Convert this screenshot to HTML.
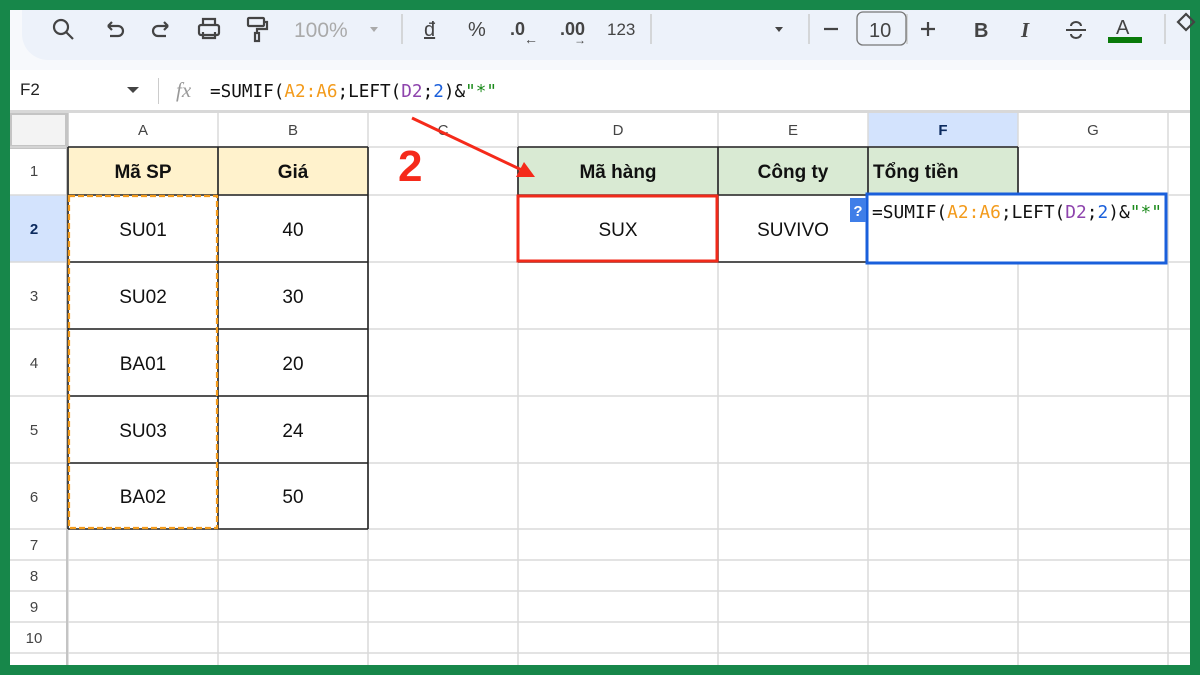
<!DOCTYPE html>
<html><head><meta charset="utf-8"><style>
*{margin:0;padding:0;box-sizing:border-box}
body{width:1200px;height:675px;background:#17874a;position:relative;overflow:hidden;font-family:"Liberation Sans",Arial,sans-serif}
.abs{position:absolute}
#main{left:10px;top:10px;width:1180px;height:655px;background:#fff;overflow:hidden}
</style></head><body>
<div id="main" class="abs">
 <div class="abs" style="left:0;top:0;width:1180px;height:60px;background:#f7f9fc"></div>
 <div class="abs" style="left:12px;top:0;width:1180px;height:50px;background:#edf2fa;border-radius:0 0 0 26px"></div>
 <div class="abs" style="left:0;top:70px;font-size:17px;color:#222;left:10px">F2</div>
 <svg class="abs" style="left:117px;top:76px" width="12" height="8"><path d="M0 1h12L6 7z" fill="#444"/></svg>
 <div class="abs" style="left:148px;top:68px;width:1px;height:26px;background:#ccc"></div>
 <div class="abs" style="left:166px;top:68px;font-family:'Liberation Serif',serif;font-style:italic;font-size:21px;color:#999">fx</div>
 <div class="abs" style="left:0;top:100px;width:1180px;height:3px;background:#d8d8d8"></div>
</div>
<!-- toolbar (body coords) -->
<svg class="abs" style="left:0;top:0" width="1200" height="110" fill="none" stroke="#444" stroke-width="2.2">
 <circle cx="61" cy="27" r="7"/><path d="M66 32l7 7"/>
 <path d="M108 26h10a5 5 0 010 10h-8M108 26l4-4M108 26l4 4"/>
 <path d="M168 26h-10a5 5 0 000 10h8M168 26l-4-4M168 26l-4 4"/>
 <rect x="199" y="25" width="20" height="10" rx="2"/><path d="M203 25v-6h12v6M203 32v6h12v-6"/>
 <rect x="248" y="18" width="16" height="8" rx="1"/><path d="M264 22h3v7h-10v4"/><rect x="255" y="33" width="4" height="8"/>
 <path d="M370 27l4 5 4-5z" fill="#aaa" stroke="none"/>
 <path d="M402 14v30M651 14v30M809 14v30M907 14v30M1165 14v30" stroke="#ccc" stroke-width="1.5"/>
 <path d="M775 27l4 5 4-5z" fill="#444" stroke="none"/>
 <path d="M824 29h14M921 29h14M928 22v14"/>
 <rect x="857" y="12" width="49" height="33" rx="6" stroke="#777" stroke-width="1.3"/>
 <path d="M1066 30h20" stroke-width="2"/>
 <path d="M1071 26a5 4 0 0110 0M1071 34a5 4 0 0010 0" stroke-width="2"/>
 <rect x="1108" y="37" width="34" height="6" fill="#0a7a0a" stroke="none"/>
 <path d="M1178 22l8-8 8 8-8 8z"/>
 <g stroke="none" font-family="Liberation Sans" fill="#444">
  <text x="294" y="37" font-size="21" fill="#aaa">100%</text>
  <text x="424" y="36" font-size="20" text-decoration="underline">đ</text>
  <text x="468" y="36" font-size="20">%</text>
  <text x="510" y="35" font-size="18" font-weight="bold">.0</text><text x="524" y="44" font-size="14">←</text>
  <text x="560" y="35" font-size="18" font-weight="bold">.00</text><text x="574" y="44" font-size="12">→</text>
  <text x="607" y="35" font-size="17">123</text>
  <text x="869" y="37" font-size="20">10</text>
  <text x="974" y="37" font-size="20" font-weight="bold">B</text>
  <text x="1021" y="37" font-size="21" font-weight="bold" font-style="italic" font-family="Liberation Serif">I</text>
  <text x="1116" y="34" font-size="20">A</text>
 </g>
 <text x="210" y="97" font-family="DejaVu Sans Mono,Liberation Mono,monospace" font-size="18" fill="#111" stroke="none" textLength="287" lengthAdjust="spacingAndGlyphs">=SUMIF(<tspan fill="#f39b1c">A2:A6</tspan>;LEFT(<tspan fill="#8e44ad">D2</tspan>;<tspan fill="#1a5fdb">2</tspan>)&amp;<tspan fill="#1a8a1a">"*"</tspan></text>
</svg>
<!-- grid -->
<svg class="abs" style="left:10px;top:113px" width="1180" height="552">
 <rect x="0" y="0" width="1180" height="34" fill="#fff"/>
 <rect x="0" y="0" width="57" height="34" fill="#f3f3f3"/>
 <rect x="0" y="0" width="57" height="34" fill="none" stroke="#c4c4c4" stroke-width="4"/>
 <rect x="858" y="0" width="150" height="34" fill="#d3e3fd"/>
 <rect x="0" y="82" width="57" height="67" fill="#d3e3fd"/>
 <rect x="58" y="34" width="300" height="48" fill="#fff2cc"/>
 <rect x="508" y="34" width="350" height="48" fill="#d9ead3"/>
 <rect x="858" y="34" width="150" height="48" fill="#d9ead3"/>
 <g stroke="#dadada" stroke-width="1.5">
  <path d="M0 34H1180M0 82H1180M0 149H1180M0 216H1180M0 283H1180M0 350H1180M0 416H1180M0 447H1180M0 478H1180M0 509H1180M0 540H1180"/>
  <path d="M58 0V552M208 0V552M358 0V552M508 0V552M708 0V552M858 0V552M1008 0V552M1158 0V552"/>
 </g>
 <path d="M57 0V552" stroke="#c4c4c4" stroke-width="2"/>
 <g stroke="#222" stroke-width="1.6" fill="none">
  <path d="M58 34H358M58 82H358M58 149H358M58 216H358M58 283H358M58 350H358M58 416H358M208 34V416M358 34V416M58 34V416"/>
  <path d="M508 34H1008M508 82H1008M508 149H858M508 34V149M708 34V149M858 34V82M1008 34V82"/>
 </g>
 <rect x="59" y="83" width="148" height="332" fill="none" stroke="#f39b1c" stroke-width="2.2" stroke-dasharray="6 3"/>
 <rect x="508" y="83" width="199" height="65" fill="#fff" stroke="#f02a1a" stroke-width="3"/>
 <rect x="857" y="81" width="299" height="69" fill="#fff" stroke="#1a5fdb" stroke-width="3"/>
 <rect x="840" y="85" width="16" height="24" fill="#3f7ee8"/>
 <text x="848" y="103" font-size="15" font-weight="bold" fill="#fff" text-anchor="middle" font-family="Liberation Sans">?</text>
 <g font-family="Liberation Sans" font-size="15" fill="#444" text-anchor="middle">
  <text x="133" y="22">A</text><text x="283" y="22">B</text><text x="433" y="22">C</text><text x="608" y="22">D</text><text x="783" y="22">E</text><text x="933" y="22" font-weight="bold" fill="#0b2a5e">F</text><text x="1083" y="22">G</text>
  <text x="24" y="63">1</text><text x="24" y="121" font-weight="bold" fill="#0b2a5e">2</text><text x="24" y="188">3</text><text x="24" y="255">4</text><text x="24" y="322">5</text><text x="24" y="389">6</text><text x="24" y="437">7</text><text x="24" y="468">8</text><text x="24" y="499">9</text><text x="24" y="530">10</text>
 </g>
 <g font-family="Liberation Sans" font-size="19" fill="#111" text-anchor="middle">
  <g font-weight="bold"><text x="133" y="65">Mã SP</text><text x="283" y="65">Giá</text><text x="608" y="65">Mã hàng</text><text x="783" y="65">Công ty</text><text x="863" y="65" text-anchor="start">Tổng tiền</text></g>
  <text x="133" y="123">SU01</text><text x="283" y="123">40</text>
  <text x="133" y="190">SU02</text><text x="283" y="190">30</text>
  <text x="133" y="257">BA01</text><text x="283" y="257">20</text>
  <text x="133" y="324">SU03</text><text x="283" y="324">24</text>
  <text x="133" y="390">BA02</text><text x="283" y="390">50</text>
  <text x="608" y="123">SUX</text><text x="783" y="123">SUVIVO</text>
 </g>
 <text x="862" y="105" font-family="DejaVu Sans Mono,Liberation Mono,monospace" font-size="18" fill="#111" textLength="290" lengthAdjust="spacingAndGlyphs">=SUMIF(<tspan fill="#f39b1c">A2:A6</tspan>;LEFT(<tspan fill="#8e44ad">D2</tspan>;<tspan fill="#1a5fdb">2</tspan>)&amp;<tspan fill="#1a8a1a">"*"</tspan></text>
 <text x="388" y="68" font-family="Liberation Sans" font-size="44" font-weight="bold" fill="#f52a1a">2</text>
 <path d="M402 5L518 60" stroke="#f52a1a" stroke-width="3"/>
 <path d="M525 64L506 64L514 49z" fill="#f52a1a"/>
</svg>
</body></html>
